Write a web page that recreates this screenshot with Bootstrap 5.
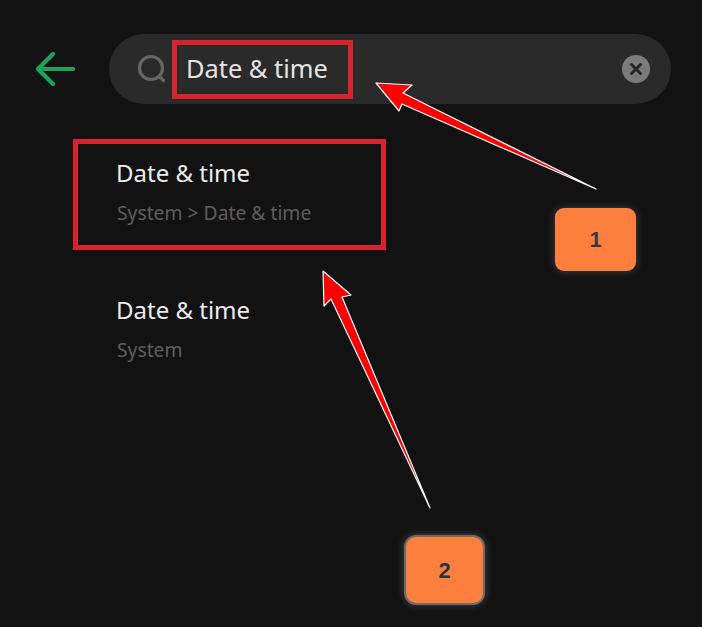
<!DOCTYPE html>
<html lang="en">
<head>
<meta charset="utf-8">
<title>Date &amp; time search</title>
<link href="https://cdn.jsdelivr.net/npm/bootstrap@5.3.0/dist/css/bootstrap.min.css" rel="stylesheet">
<style>
html,body{height:100%}
body{background:#121212;font-family:"Noto Sans","Liberation Sans",sans-serif;overflow:hidden}
.stage{position:relative;width:702px;height:627px;padding-top:34px}
.topline{height:70px}
.backslot{width:109px;padding-left:35px}
.backslot svg{display:block}
.pill{width:562px;height:70px;background:#2a2a2a;border-radius:35px;padding:0 21px 0 27px}
.pill-query{height:59px;width:181px;margin-left:6px;border:5px solid #d7232e;padding-left:9px;color:#e4e4e4;font-size:25.4px;line-height:1}
.results{margin:35px 0 0 73px;width:313px}
.hit{padding-left:44px}
.hit-main{color:#ececec;font-size:24px;line-height:32px;margin-left:-1px}
.hit-sub{color:#5e5e5e;font-size:19.3px;line-height:26px;margin-top:11px}
.hit-boxed{height:111px;border:5px solid #d7232e;padding-left:39px;padding-top:13px}
.hit-plain{margin-top:44px;padding-top:0}
.arrows{position:absolute;left:0;top:0;pointer-events:none}
.tag{position:absolute;background:#ff7f3f;color:#2b3340;font-family:"Liberation Sans",sans-serif;font-weight:700;font-size:22px;border-radius:9px;box-shadow:0 0 8px rgba(255,255,255,.22)}
.tag-one{left:555px;top:208px;width:81px;height:63px;color:#3a3a3a}
.tag-two{left:404px;top:535px;width:81px;height:70px;border:2px solid #6b6b6b;border-radius:12px}
</style>
</head>
<body>
<div class="stage">
  <div class="topline d-flex align-items-center">
    <div class="backslot flex-shrink-0">
      <svg width="40" height="34" viewBox="0 0 40 34" fill="none" stroke="#1ba35c" stroke-width="4.2" stroke-linecap="round" stroke-linejoin="round"><path d="M38 17H3M18 2 3 17l15 15"/></svg>
    </div>
    <div class="pill d-flex align-items-center">
      <svg class="flex-shrink-0" width="30" height="30" viewBox="0 0 30 30" fill="none" stroke="#666" stroke-width="3.2" stroke-linecap="round"><circle cx="15" cy="14" r="11.5"/><path d="M24 23l3.5 3.5"/></svg>
      <div class="pill-query d-flex align-items-center">Date &amp; time</div>
      <svg class="ms-auto flex-shrink-0" width="28" height="28" viewBox="0 0 28 28"><circle cx="14" cy="14" r="14" fill="#7b7b7b"/><path d="M9.5 9.5l9 9M18.5 9.5l-9 9" stroke="#262626" stroke-width="3" stroke-linecap="round"/></svg>
    </div>
  </div>
  <div class="results">
    <div class="hit hit-boxed">
      <div class="hit-main">Date &amp; time</div>
      <div class="hit-sub">System &gt; Date &amp; time</div>
    </div>
    <div class="hit hit-plain">
      <div class="hit-main">Date &amp; time</div>
      <div class="hit-sub">System</div>
    </div>
  </div>
  <svg class="arrows" width="702" height="627" viewBox="0 0 702 627">
    <g fill="#f00" stroke="#fff" stroke-width="1.2" stroke-linejoin="round">
      <path d="M376 83 412 85 403 93 596 189 402 104 399 111Z"/>
      <path d="M323 271 351 295 342 297 430 508 331 299 324 306Z"/>
    </g>
  </svg>
  <div class="tag tag-one d-flex align-items-center justify-content-center">1</div>
  <div class="tag tag-two d-flex align-items-center justify-content-center">2</div>
</div>
<script src="https://cdn.jsdelivr.net/npm/bootstrap@5.3.0/dist/js/bootstrap.bundle.min.js"></script>
</body>
</html>
